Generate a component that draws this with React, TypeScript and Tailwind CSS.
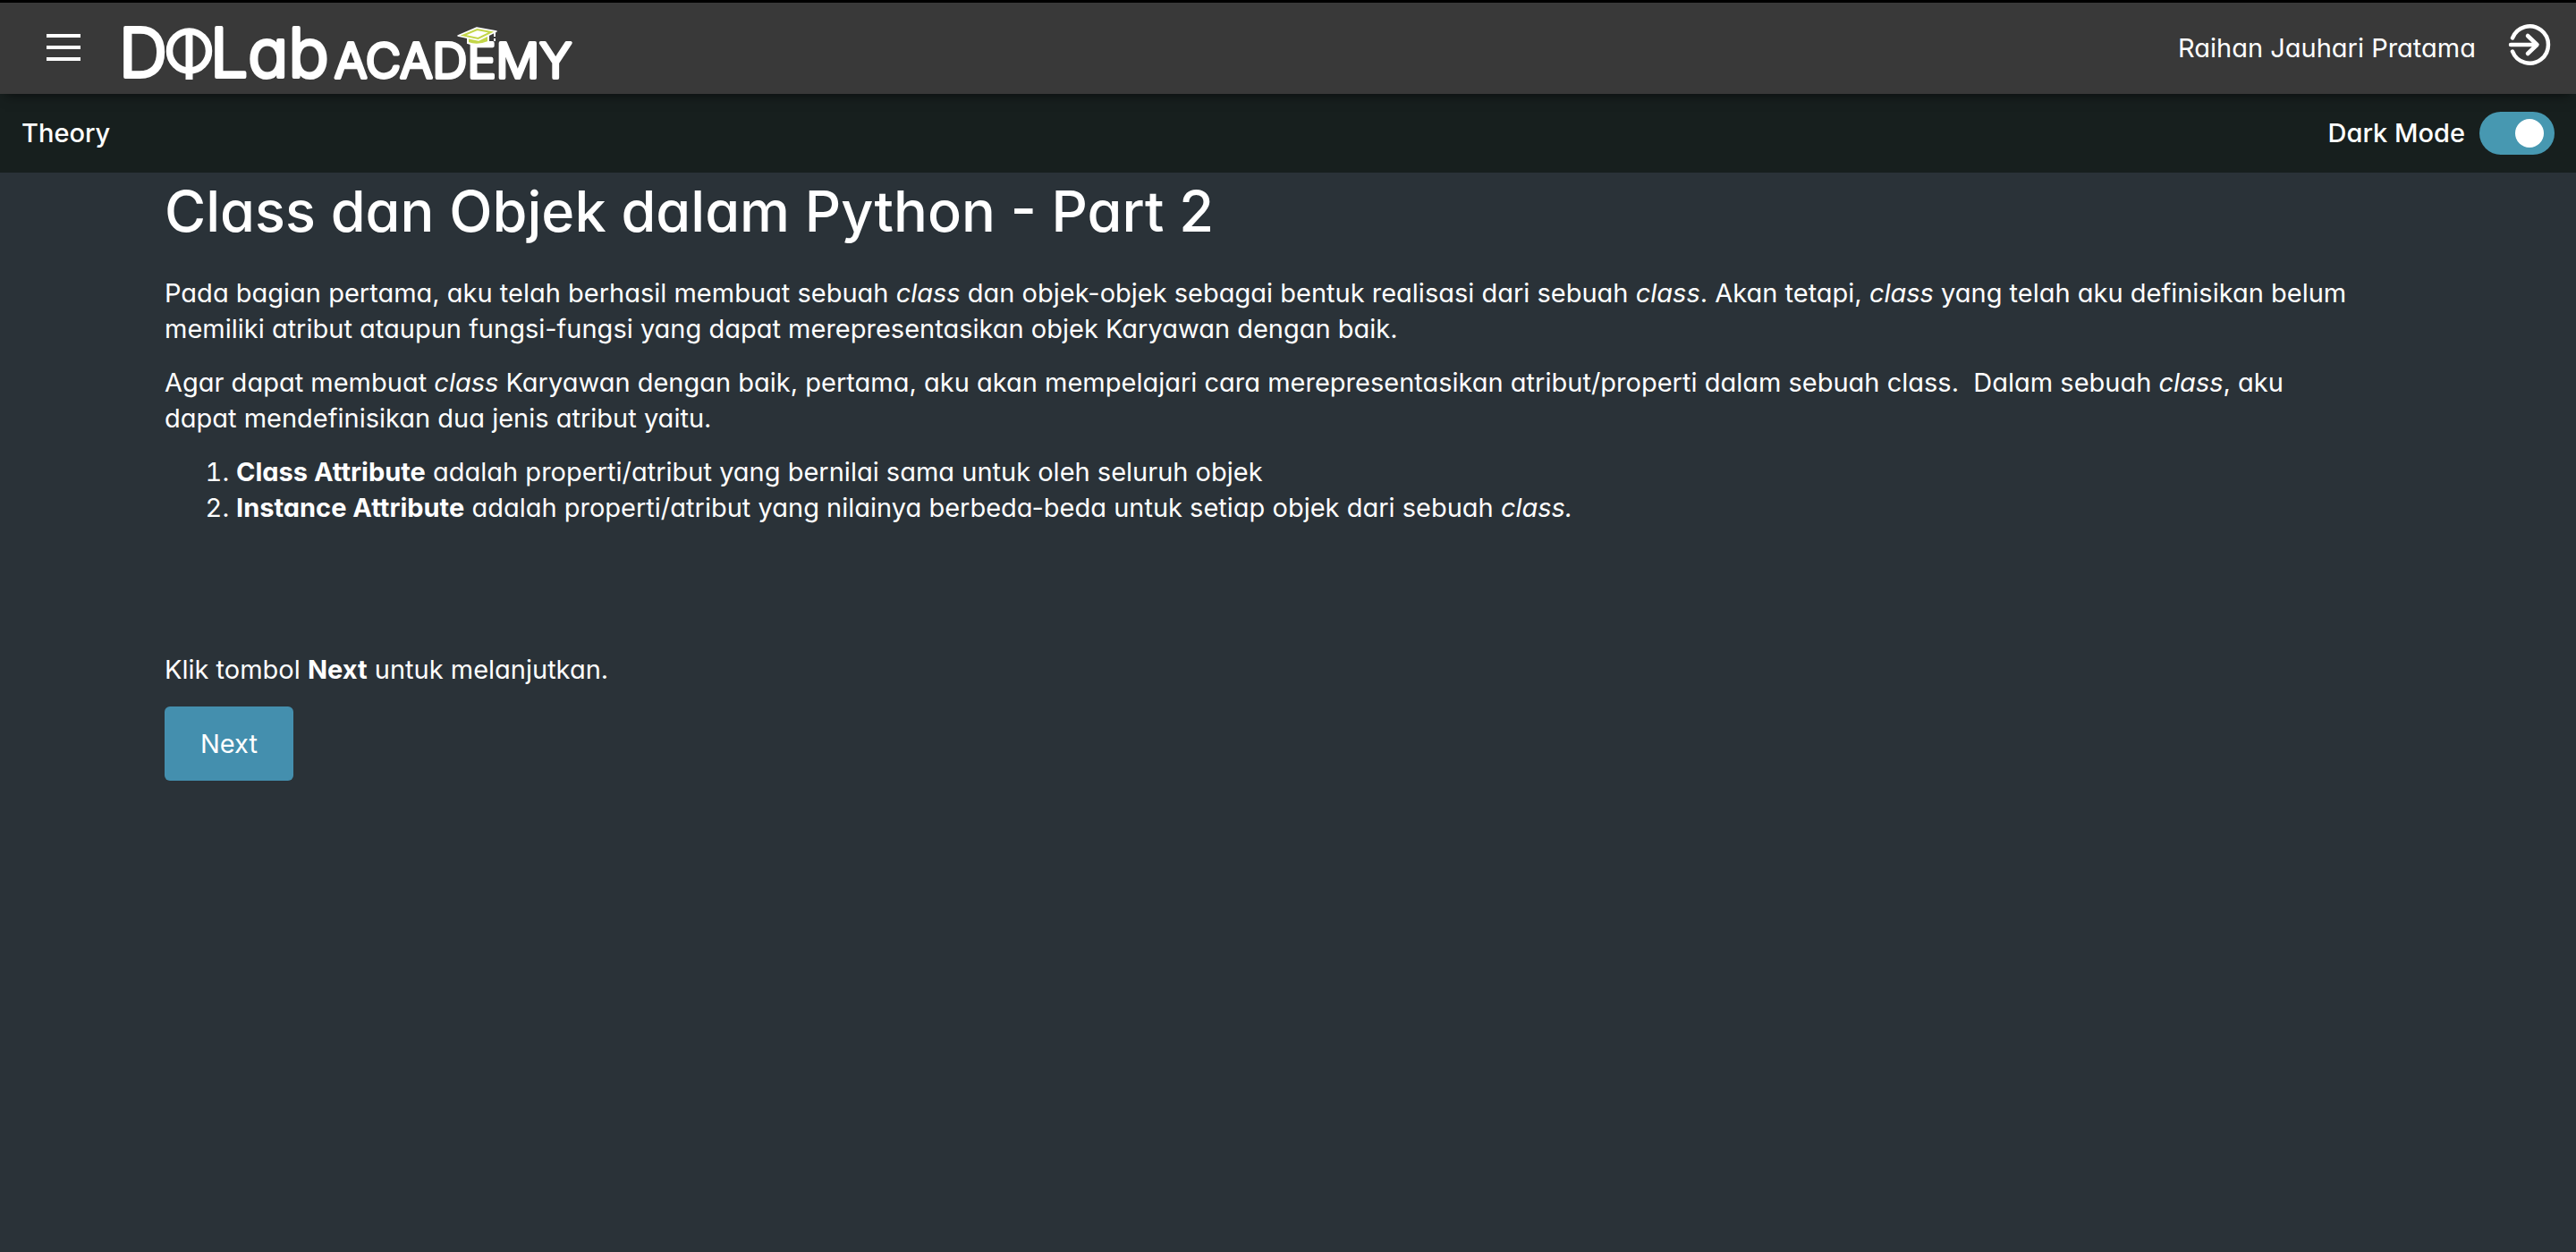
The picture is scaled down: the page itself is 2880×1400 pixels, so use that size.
import { useState } from "react";

function Logo() {
  return (
    <svg
      viewBox="-10 0 524 102"
      className="h-[102px] w-[524px] font-['Inter',sans-serif] [font-feature-settings:'cv11']"
      role="img"
      aria-label="DQLab Academy"
    >
      <g fill="#fff" stroke="#fff" strokeWidth="4" strokeLinejoin="round">
        <text x="-5" y="83" fontSize="75" fontWeight="300">D</text>
        <text x="97" y="83" fontSize="75" fontWeight="300">Lab</text>
        <text x="236" y="84" fontSize="54" fontWeight="300">ACADEMY</text>
      </g>
      <ellipse cx="73.5" cy="54" rx="22" ry="22" fill="none" stroke="#fff" strokeWidth="7.500" />
      <path d="M73.500 30V86" stroke="#fff" strokeWidth="8" />
      <path d="M385 38V45Q396 49 408 44V36Z" fill="#c3d649" stroke="#fff" strokeWidth="2" />
      <path d="M374 37L395 28L417 32L397 42Z" fill="#fff" stroke="#fff" strokeWidth="1.500" strokeLinejoin="round" />
      <path d="M380 36.500L395.500 30L411 33L396.500 40Z" fill="#fff" stroke="#c3d649" strokeWidth="2" />
      <path d="M415 33V38M415 40V43" stroke="#fff" strokeWidth="2" />
    </svg>
  );
}

function ExitIcon() {
  return (
    <svg viewBox="0 0 48 48" className="size-12" fill="none" stroke="#fff" strokeWidth="4.500" strokeLinecap="round" strokeLinejoin="round" aria-hidden="true">
      <path d="M5 16.500A20.700 20.700 0 1 1 5 31.500" />
      <path d="M3 24H32M22 14L32.500 24L22 34" />
    </svg>
  );
}

export default function App() {
  const [dark, setDark] = useState(true);
  return (
    <div className="min-h-screen bg-[#2a3238] font-['Inter',sans-serif] text-[29px] leading-10 text-white [font-feature-settings:'cv11']">
      <div className="h-[3px] bg-black" />
      <header className="relative flex h-[102px] items-center bg-[#393939] pr-7 pl-[52px] shadow-[0_8px_12px_-6px_rgba(0,0,0,0.5)]">
        <button aria-label="Menu" className="mb-0.5 flex w-[38px] flex-col gap-[9px]">
          <span className="h-1 bg-white" />
          <span className="h-1 bg-white" />
          <span className="h-1 bg-white" />
        </button>
        <a href="#" className="ml-[38px]">
          <Logo />
        </a>
        <span className="ml-auto">Raihan Jauhari Pratama</span>
        <button aria-label="Log out" className="ml-9 pb-2">
          <ExitIcon />
        </button>
      </header>
      <div className="flex h-[88px] items-center justify-between bg-[#171f1e] px-6 font-medium">
        <span>Theory</span>
        <label className="flex cursor-pointer items-center gap-4">
          Dark Mode
          <input
            type="checkbox"
            role="switch"
            checked={dark}
            onChange={(e) => setDark(e.target.checked)}
            className="h-12 w-[84px] appearance-none rounded-full bg-gray-500 p-2 before:block before:size-8 before:rounded-full before:bg-white checked:bg-[#4798b1] checked:pl-10"
          />
        </label>
      </div>
      <main className="px-[184px] pt-[7px]">
        <h1 className="mb-9 text-[63px] leading-[72px] font-medium">Class dan Objek dalam Python - Part 2</h1>
        <p className="mb-5">
          Pada bagian pertama, aku telah berhasil membuat sebuah <em>class</em> dan objek-objek sebagai bentuk realisasi dari sebuah <em>class</em>. Akan tetapi, <em>class</em> yang telah aku definisikan belum memiliki atribut ataupun fungsi-fungsi yang dapat merepresentasikan objek Karyawan dengan baik.
        </p>
        <p className="mb-5">
          Agar dapat membuat <em>class</em> Karyawan dengan baik, pertama, aku akan mempelajari cara merepresentasikan atribut/properti dalam sebuah class.&nbsp; Dalam sebuah <em>class</em>, aku
          <br />
          dapat mendefinisikan dua jenis atribut yaitu.
        </p>
        <ol className="list-decimal pl-20">
          <li>
            <strong>Class Attribute</strong> adalah properti/atribut yang bernilai sama untuk oleh seluruh objek
          </li>
          <li>
            <strong>Instance Attribute</strong> adalah properti/atribut yang nilainya berbeda-beda untuk setiap objek dari sebuah <em>class.</em>
          </li>
        </ol>
        <p className="mt-[141px] mb-[21px]">
          Klik tombol <strong>Next</strong> untuk melanjutkan.
        </p>
        <button className="h-[83px] rounded-md bg-[#448fae] px-10">Next</button>
      </main>
    </div>
  );
}
